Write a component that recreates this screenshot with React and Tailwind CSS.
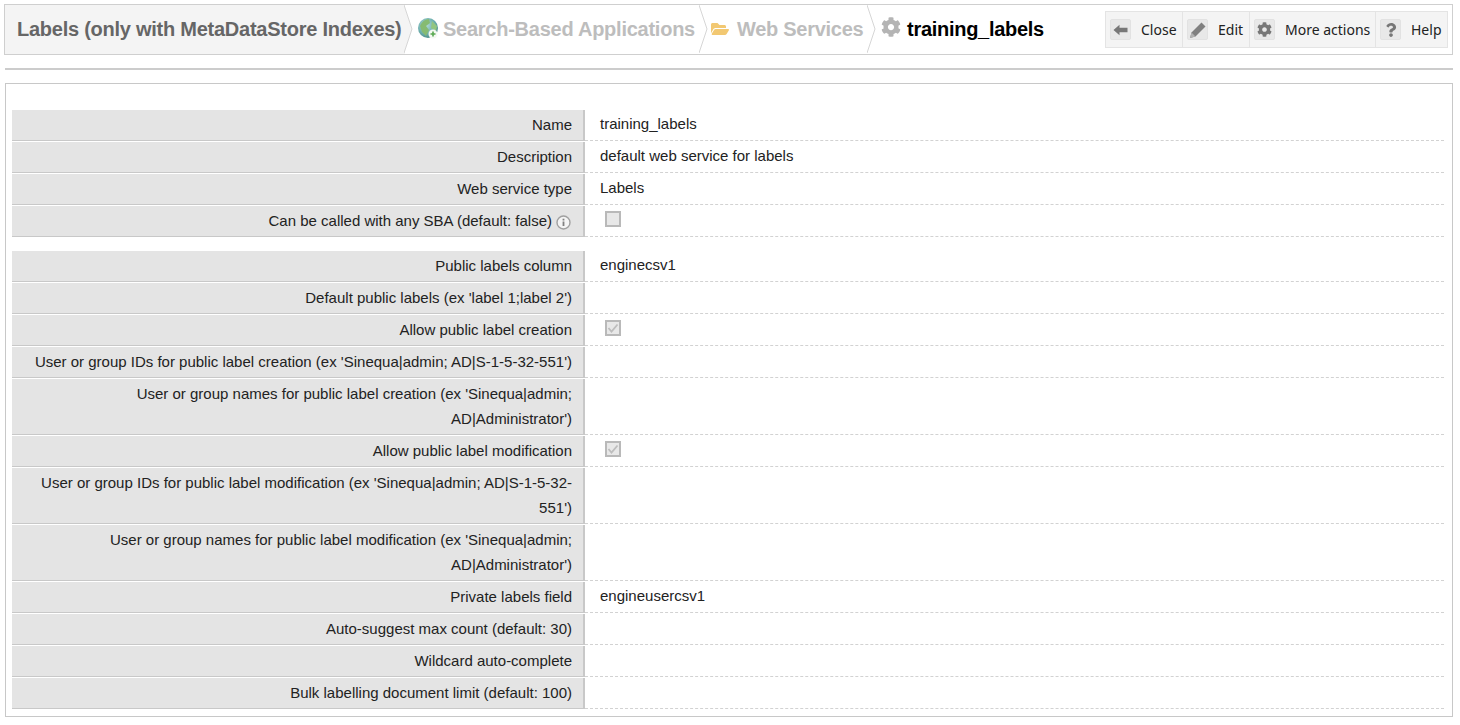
import React from 'react';
import { FaCog, FaFolderOpen, FaQuestion } from 'react-icons/fa';

// ─── Breadcrumb ──────────────────────────────────────────────────────────────
const Chevron = ({ fill = 'none' }) => (
    <svg className="absolute right-[-8px] top-0 h-[48px] w-[9px]" viewBox="0 0 9 48">
        <polygon points="0,0 8,24 0,48" fill={fill} />
        <polyline points="0,0 8,24 0,48" fill="none" stroke="#d6d6d6" strokeWidth="1" />
    </svg>
);

const GlobeIcon = () => (
    <svg width="22" height="24" viewBox="0 0 22 24" className="shrink-0">
        <defs>
            <radialGradient id="globe" cx="0.4" cy="0.35" r="0.7">
                <stop offset="0" stopColor="#b4dcd8" />
                <stop offset="0.6" stopColor="#6fb0b0" />
                <stop offset="1" stopColor="#4a8a84" />
            </radialGradient>
        </defs>
        <circle cx="11" cy="11" r="10" fill="url(#globe)" />
        <path d="M3 9 Q6 2 12 2 L13 6 L9 9 L12 13 L9 19 L5 15 Z" fill="#86bb72" />
        <path d="M15 4 L20 9 L19 14 L14 11 Z" fill="#93c680" />
        <circle cx="16" cy="17" r="4.5" fill="#f4f8f2" />
        <path d="M16 14.5 V19.5 M13.5 17 H18.5" stroke="#58a850" strokeWidth="1.6" />
    </svg>
);

const ArrowIcon = () => (
    <svg width="15" height="12" viewBox="0 0 15 12">
        <path d="M0.5 6 L6.5 0.8 V3.8 H14.5 V8.2 H6.5 V11.2 Z" fill="#777777" />
    </svg>
);

const PencilIcon = () => (
    <svg width="18" height="18" viewBox="0 0 18 18">
        <path d="M1 17 L2.5 11.5 L12.5 1.5 L16.5 5.5 L6.5 15.5 Z" fill="#808080" />
        <path d="M1 17 L2.5 11.5 L6.5 15.5 Z" fill="#b0b0b0" />
    </svg>
);

const ToolButton = ({ icon, label, className }) => (
    <div className={`flex h-full items-center border-r border-[#e4e4e4] pl-[4px] last:border-r-0 ${className}`}>
        <span className="flex h-[21px] w-[21px] items-center justify-center rounded-[2px] border border-[#e2e2e2] bg-[#e8e8e8] text-[#777777]">
            {icon}
        </span>
        <span className="ml-[10px] text-[14px] text-[#222222]">{label}</span>
    </div>
);

const Header = () => (
    <div className="mx-[4px] mt-[4px] flex h-[51px] w-[1449px] items-center border border-[#cfcfcf] bg-white">
        <div className="relative flex h-[49px] w-[400px] items-center bg-[#f4f4f4] pb-[2px] pl-[12px]">
            <span className="text-[20px] font-bold tracking-[-0.25px] text-[#666666]">Labels (only with MetaDataStore Indexes)</span>
            <Chevron fill="#f4f4f4" />
        </div>
        <div className="relative flex h-[49px] w-[295px] items-center pb-[1px] pl-[12px]">
            <GlobeIcon />
            <span className="ml-[4px] text-[20px] font-bold tracking-[-0.25px] text-[#bdbdbd]">Search-Based Applications</span>
            <Chevron />
        </div>
        <div className="relative flex h-[49px] w-[168px] items-center pb-[1px] pl-[11px]">
            <FaFolderOpen className="text-[18px] text-[#f2c872]" />
            <span className="ml-[8px] text-[20px] font-bold tracking-[-0.28px] text-[#bdbdbd]">Web Services</span>
            <Chevron />
        </div>
        <div className="flex h-[49px] flex-1 items-center pb-[2px] pl-[13px]">
            <FaCog className="mb-[4px] text-[20px] text-[#b4b4b4]" />
            <span className="ml-[6px] text-[20px] font-bold tracking-[-0.28px] text-black">training_labels</span>
        </div>
        <div className="mr-[4px] flex h-[37px] items-center border border-[#e4e4e4] bg-[#f4f4f4] font-['Noto_Sans',sans-serif]">
            <ToolButton icon={<ArrowIcon />} label="Close" className="w-[77px]" />
            <ToolButton icon={<PencilIcon />} label="Edit" className="w-[67px]" />
            <ToolButton icon={<FaCog className="text-[15px]" />} label="More actions" className="w-[126px]" />
            <ToolButton icon={<FaQuestion className="text-[14px]" />} label="Help" className="w-[71px]" />
        </div>
    </div>
);

// ─── Form rows ───────────────────────────────────────────────────────────────
const InfoIcon = () => (
    <svg width="15" height="15" viewBox="0 0 15 15" className="ml-[4px] inline-block align-[-4px]">
        <circle cx="7.5" cy="7.5" r="6.5" fill="#f4f4f4" stroke="#a0a0a0" strokeWidth="1.4" />
        <rect x="6.6" y="6.5" width="1.8" height="4.5" fill="#808080" />
        <rect x="6.6" y="3.7" width="1.8" height="1.8" fill="#808080" />
    </svg>
);

const Checkbox = ({ checked }) => (
    <span className="ml-[5px] flex h-[16px] w-[16px] items-center justify-center border-2 border-[#b9b9b9] bg-[#e8e8e8]">
        {checked && (
            <svg width="12" height="12" viewBox="0 0 12 12">
                <polyline points="1.5,6 4.5,9.5 10.5,2.5" fill="none" stroke="#bdbdbd" strokeWidth="1.8" />
            </svg>
        )}
    </span>
);

const Row = ({ label, value, checkbox, checked, info, tall, spaced }) => (
    <div className={`flex ${tall ? 'h-[57px]' : 'h-[32px]'} ${spaced ? 'mb-[13px]' : ''}`}>
        <div className={`mb-px w-[573px] border-r-2 border-b border-[#c8c8c8] bg-[#e4e4e4] pl-2 pt-[2px] text-right leading-[25px] text-[#222222] ${info ? 'pr-[12px]' : 'pr-[11px]'}`}>
            {label}
            {info && <InfoIcon />}
        </div>
        <div className="mb-px flex flex-1 border-b border-dashed border-[#d2d2d2] pl-[15px] pt-[1px] leading-[25px] text-[#222222]">
            {checkbox ? (
                <span className="pt-[4px]">
                    <Checkbox checked={checked} />
                </span>
            ) : (
                value
            )}
        </div>
    </div>
);

const Panel = () => (
    <div className="mx-[5px] mt-[13px] h-[634px] w-[1448px] border border-[#c8c8c8] bg-white pl-[6px] pr-[8px] pt-[26px] text-[15px]">
        <Row label="Name" value="training_labels" />
        <Row label="Description" value="default web service for labels" />
        <Row label="Web service type" value="Labels" />
        <Row label="Can be called with any SBA (default: false)" info checkbox spaced />
        <Row label="Public labels column" value="enginecsv1" />
        <Row label="Default public labels (ex 'label 1;label 2')" />
        <Row label="Allow public label creation" checkbox checked />
        <Row label="User or group IDs for public label creation (ex 'Sinequa|admin; AD|S-1-5-32-551')" />
        <Row tall label="User or group names for public label creation (ex 'Sinequa|admin; AD|Administrator')" />
        <Row label="Allow public label modification" checkbox checked />
        <Row tall label="User or group IDs for public label modification (ex 'Sinequa|admin; AD|S-1-5-32-551')" />
        <Row tall label="User or group names for public label modification (ex 'Sinequa|admin; AD|Administrator')" />
        <Row label="Private labels field" value="engineusercsv1" />
        <Row label="Auto-suggest max count (default: 30)" />
        <Row label="Wildcard auto-complete" />
        <Row label="Bulk labelling document limit (default: 100)" />
    </div>
);

export default function App() {
    return (
        <div className="h-[725px] w-[1460px] overflow-hidden bg-white font-['Liberation_Sans',Arial,sans-serif]">
            <Header />
            <div className="mx-[5px] mt-[13px] h-[2px] w-[1448px] bg-[#cccccc]" />
            <Panel />
        </div>
    );
}
